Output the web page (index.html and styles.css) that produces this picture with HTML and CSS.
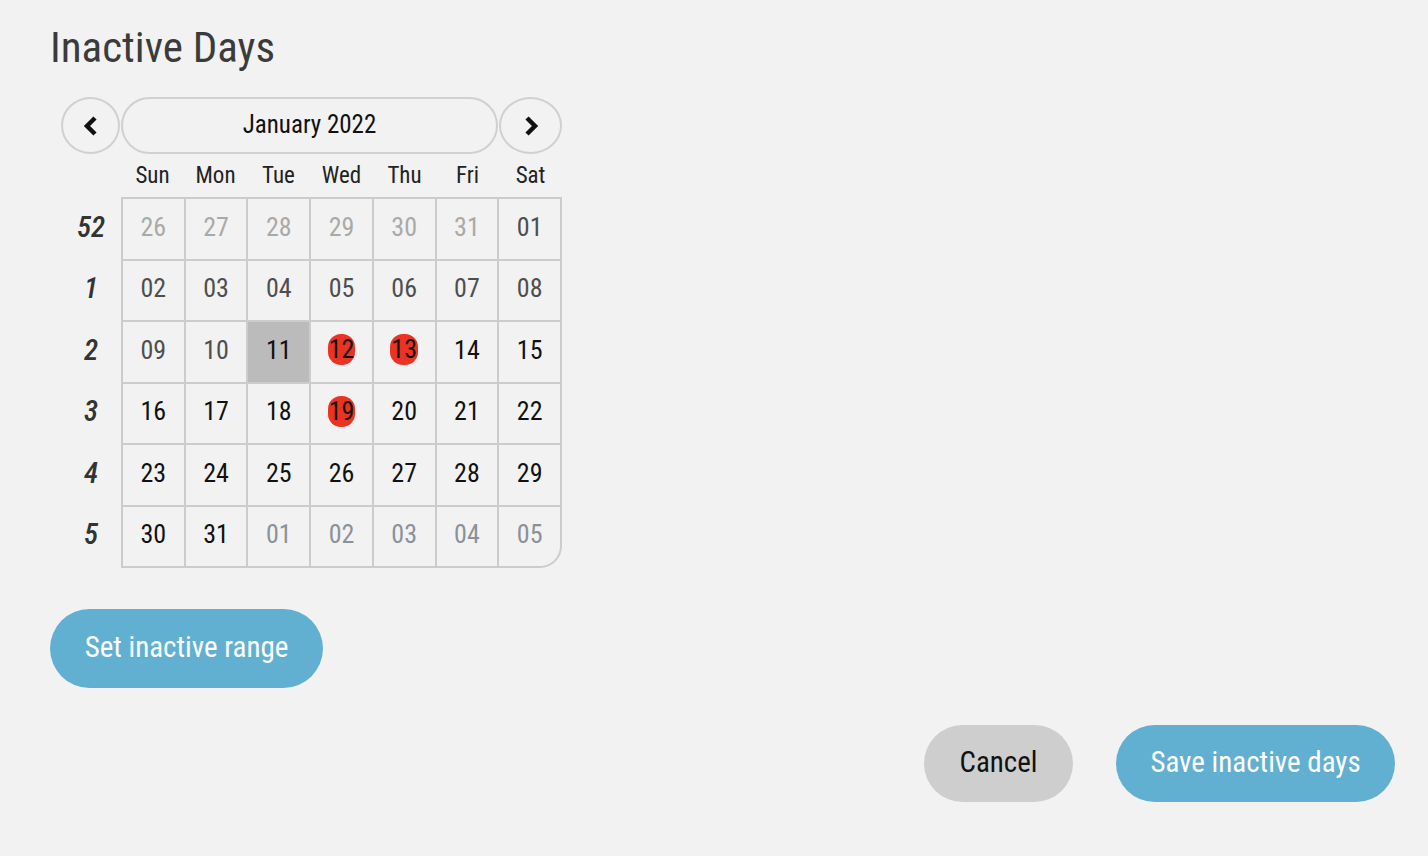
FILE: index.html
```html
<!DOCTYPE html>
<html lang="en">
<head>
    <meta charset="UTF-8">
    <meta name="viewport" content="width=device-width, initial-scale=1.0">
    <title>Inactive Days</title>
    <link rel="stylesheet" href="styles.css">
</head>
<body>
    <div class="page">
        <h1>Inactive Days</h1>

        <div class="calendar">
            <div class="cal-nav">
                <button class="nav-btn prev" aria-label="Previous month">
                    <svg width="20" height="24" viewBox="0 0 20 24"><path d="M14 4 L6 12 L14 20" fill="none" stroke="#111" stroke-width="4.5" stroke-linejoin="miter"/></svg>
                </button>
                <div class="nav-title">January 2022</div>
                <button class="nav-btn next" aria-label="Next month">
                    <svg width="20" height="24" viewBox="0 0 20 24"><path d="M6 4 L14 12 L6 20" fill="none" stroke="#111" stroke-width="4.5" stroke-linejoin="miter"/></svg>
                </button>
            </div>

            <div class="weekdays">
                <span>Sun</span><span>Mon</span><span>Tue</span><span>Wed</span><span>Thu</span><span>Fri</span><span>Sat</span>
            </div>

            <div class="cal-body">
                <div class="weeks">
                    <span>52</span><span>1</span><span>2</span><span>3</span><span>4</span><span>5</span>
                </div>
                <div class="days">
                    <div class="day other">26</div>
                    <div class="day other">27</div>
                    <div class="day other">28</div>
                    <div class="day other">29</div>
                    <div class="day other">30</div>
                    <div class="day other">31</div>
                    <div class="day past">01</div>

                    <div class="day past">02</div>
                    <div class="day past">03</div>
                    <div class="day past">04</div>
                    <div class="day past">05</div>
                    <div class="day past">06</div>
                    <div class="day past">07</div>
                    <div class="day past">08</div>

                    <div class="day past">09</div>
                    <div class="day past">10</div>
                    <div class="day today">11</div>
                    <div class="day"><span class="inactive">12</span></div>
                    <div class="day"><span class="inactive">13</span></div>
                    <div class="day">14</div>
                    <div class="day">15</div>

                    <div class="day">16</div>
                    <div class="day">17</div>
                    <div class="day">18</div>
                    <div class="day"><span class="inactive">19</span></div>
                    <div class="day">20</div>
                    <div class="day">21</div>
                    <div class="day">22</div>

                    <div class="day">23</div>
                    <div class="day">24</div>
                    <div class="day">25</div>
                    <div class="day">26</div>
                    <div class="day">27</div>
                    <div class="day">28</div>
                    <div class="day">29</div>

                    <div class="day">30</div>
                    <div class="day">31</div>
                    <div class="day next">01</div>
                    <div class="day next">02</div>
                    <div class="day next">03</div>
                    <div class="day next">04</div>
                    <div class="day next corner">05</div>
                </div>
            </div>
        </div>

        <button class="btn btn-blue btn-range">Set inactive range</button>

        <div class="actions">
            <button class="btn btn-gray btn-cancel">Cancel</button>
            <button class="btn btn-blue btn-save">Save inactive days</button>
        </div>
    </div>
</body>
</html>
```

FILE: styles.css
```css
body {
    margin: 0;
    background-color: #f2f2f2;
    font-family: "Roboto Condensed", Roboto, "Liberation Sans", sans-serif;
    font-stretch: condensed;
    color: #111;
}

.page {
    padding: 21px 33px 0 50px;
}

h1 {
    margin: 0;
    font-size: 43px;
    line-height: 52px;
    font-weight: 400;
    color: #3b3b3b;
}

.calendar {
    width: 501px;
    margin: 24px 0 0 11px;
}

.cal-nav {
    display: flex;
    gap: 1px;
    height: 57px;
}

.nav-btn {
    width: 60px;
    height: 57px;
    border: 2px solid #d0d0d0;
    border-radius: 50%;
    background: transparent;
    padding: 0;
    display: flex;
    align-items: center;
    justify-content: center;
    cursor: pointer;
}

.nav-btn.prev {
    width: 59px;
}

.nav-btn.next {
    width: 63px;
}

.nav-title {
    flex: 1;
    border: 2px solid #d0d0d0;
    border-radius: 29px;
    display: flex;
    align-items: center;
    justify-content: center;
    padding-bottom: 2px;
    font-size: 25px;
    color: #111;
}

.weekdays {
    display: flex;
    padding-left: 60px;
    height: 43px;
    align-items: center;
    font-size: 23px;
    color: #222;
}

.weekdays span {
    flex: 1;
    text-align: center;
}

.cal-body {
    display: flex;
}

.weeks {
    width: 60px;
    display: grid;
    grid-template-rows: repeat(6, 1fr);
    padding: 2px 0;
    row-gap: 2px;
}

.weeks span {
    display: flex;
    align-items: center;
    justify-content: center;
    padding-bottom: 4px;
    font-size: 29px;
    font-style: italic;
    font-weight: 500;
    color: #333;
}

.days {
    flex: 1;
    display: grid;
    grid-template-columns: repeat(7, 1fr);
    grid-auto-rows: 59.5px;
    gap: 2px;
    padding: 2px;
    background-color: #cccccc;
    border-bottom-right-radius: 22px;
}

.day {
    background-color: #f2f2f2;
    display: flex;
    align-items: center;
    justify-content: center;
    padding-bottom: 4px;
    font-size: 26px;
    color: #111;
}

.day.other {
    color: #a9a9a9;
}

.day.past {
    color: #4e4e4e;
}

.day.next {
    color: #8a9199;
}

.day.today {
    background-color: #bbbbbb;
}

.day.corner {
    border-bottom-right-radius: 20px;
}

.inactive {
    background-color: #ea3323;
    border-radius: 13px;
    padding: 2px 1px;
    line-height: 27px;
}

.btn {
    border: none;
    font-family: inherit;
    font-stretch: condensed;
    font-size: 29px;
    border-radius: 40px;
    cursor: pointer;
    padding: 0 0 3px;
}

.btn-blue {
    background-color: #62b0d1;
    color: #fff;
}

.btn-gray {
    background-color: #cecece;
    color: #111;
}

.btn-range {
    margin-top: 41px;
    width: 273px;
    height: 79px;
}

.actions {
    display: flex;
    justify-content: flex-end;
    gap: 43px;
    margin-top: 37px;
}

.btn-cancel {
    width: 149px;
    height: 77px;
}

.btn-save {
    width: 279px;
    height: 77px;
}
```
